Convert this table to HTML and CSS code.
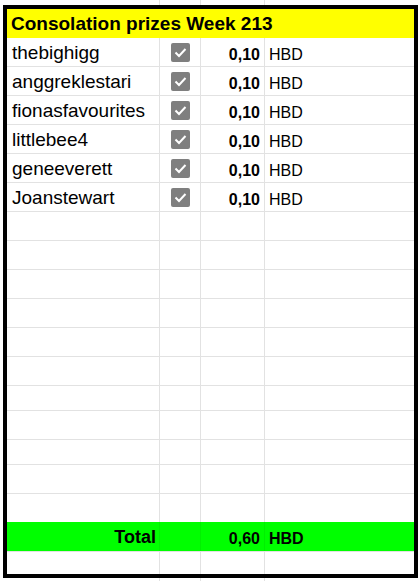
FILE: index.html
```html
<!DOCTYPE html>
<html>
<head>
<meta charset="utf-8">
<link rel="stylesheet" href="styles.css">
</head>
<body>
<div class="sheet">
  <div class="box">
    <div class="title">Consolation prizes Week 213</div>

    <div class="row h29"><div class="cell ca name">thebighigg</div><div class="cell cb"><svg class="chk" viewBox="0 0 19 19"><rect width="19" height="19" rx="2" fill="#7f7f7f"/><path d="M4.5 9.5 L8 13 L14.5 6" fill="none" stroke="#fff" stroke-width="2"/></svg></div><div class="cell cc num">0,10</div><div class="cell cd cur">HBD</div></div>
    <div class="row h29"><div class="cell ca name">anggreklestari</div><div class="cell cb"><svg class="chk" viewBox="0 0 19 19"><rect width="19" height="19" rx="2" fill="#7f7f7f"/><path d="M4.5 9.5 L8 13 L14.5 6" fill="none" stroke="#fff" stroke-width="2"/></svg></div><div class="cell cc num">0,10</div><div class="cell cd cur">HBD</div></div>
    <div class="row h29"><div class="cell ca name">fionasfavourites</div><div class="cell cb"><svg class="chk" viewBox="0 0 19 19"><rect width="19" height="19" rx="2" fill="#7f7f7f"/><path d="M4.5 9.5 L8 13 L14.5 6" fill="none" stroke="#fff" stroke-width="2"/></svg></div><div class="cell cc num">0,10</div><div class="cell cd cur">HBD</div></div>
    <div class="row h29"><div class="cell ca name">littlebee4</div><div class="cell cb"><svg class="chk" viewBox="0 0 19 19"><rect width="19" height="19" rx="2" fill="#7f7f7f"/><path d="M4.5 9.5 L8 13 L14.5 6" fill="none" stroke="#fff" stroke-width="2"/></svg></div><div class="cell cc num">0,10</div><div class="cell cd cur">HBD</div></div>
    <div class="row h29"><div class="cell ca name">geneeverett</div><div class="cell cb"><svg class="chk" viewBox="0 0 19 19"><rect width="19" height="19" rx="2" fill="#7f7f7f"/><path d="M4.5 9.5 L8 13 L14.5 6" fill="none" stroke="#fff" stroke-width="2"/></svg></div><div class="cell cc num">0,10</div><div class="cell cd cur">HBD</div></div>
    <div class="row h29"><div class="cell ca name">Joanstewart</div><div class="cell cb"><svg class="chk" viewBox="0 0 19 19"><rect width="19" height="19" rx="2" fill="#7f7f7f"/><path d="M4.5 9.5 L8 13 L14.5 6" fill="none" stroke="#fff" stroke-width="2"/></svg></div><div class="cell cc num">0,10</div><div class="cell cd cur">HBD</div></div>

    <div class="row h29"><div class="cell ca"></div><div class="cell cb"></div><div class="cell cc"></div><div class="cell cd"></div></div>
    <div class="row h29"><div class="cell ca"></div><div class="cell cb"></div><div class="cell cc"></div><div class="cell cd"></div></div>
    <div class="row h29"><div class="cell ca"></div><div class="cell cb"></div><div class="cell cc"></div><div class="cell cd"></div></div>
    <div class="row h29"><div class="cell ca"></div><div class="cell cb"></div><div class="cell cc"></div><div class="cell cd"></div></div>
    <div class="row h29"><div class="cell ca"></div><div class="cell cb"></div><div class="cell cc"></div><div class="cell cd"></div></div>
    <div class="row h29"><div class="cell ca"></div><div class="cell cb"></div><div class="cell cc"></div><div class="cell cd"></div></div>
    <div class="row h25"><div class="cell ca"></div><div class="cell cb"></div><div class="cell cc"></div><div class="cell cd"></div></div>
    <div class="row h29"><div class="cell ca"></div><div class="cell cb"></div><div class="cell cc"></div><div class="cell cd"></div></div>
    <div class="row h25"><div class="cell ca"></div><div class="cell cb"></div><div class="cell cc"></div><div class="cell cd"></div></div>
    <div class="row h29"><div class="cell ca"></div><div class="cell cb"></div><div class="cell cc"></div><div class="cell cd"></div></div>
    <div class="row h28 noline"><div class="cell ca"></div><div class="cell cb"></div><div class="cell cc"></div><div class="cell cd"></div></div>

    <div class="row total"><div class="cell ca tlabel">Total</div><div class="cell cb"></div><div class="cell cc num">0,60</div><div class="cell cd cur bold">HBD</div></div>
    <div class="row tail"><div class="cell ca"></div><div class="cell cb"></div><div class="cell cc"></div><div class="cell cd"></div></div>
  </div>
</div>
</body>
</html>
```

FILE: styles.css
```css
html, body {
  margin: 0;
  padding: 0;
  background: #fff;
}

.sheet {
  width: 420px;
  height: 581px;
  overflow: hidden;
  font-family: "Liberation Sans", Arial, sans-serif;
  color: #000;
  background-image:
    linear-gradient(#e2e2e2, #e2e2e2),
    linear-gradient(#e2e2e2, #e2e2e2),
    linear-gradient(#e2e2e2, #e2e2e2);
  background-size: 1px 100%, 1px 100%, 1px 100%;
  background-position: 159px 0, 200px 0, 264px 0;
  background-repeat: no-repeat;
  padding-top: 5px;
  box-sizing: border-box;
}

.box {
  margin-left: 3px;
  width: 407px;
  height: 565px;
  border: 4px solid #000;
  background: #fff;
  display: flex;
  flex-direction: column;
  overflow: hidden;
}

.title {
  height: 29px;
  flex: none;
  background: #ffff00;
  font-weight: bold;
  font-size: 19px;
  display: flex;
  align-items: center;
  padding-left: 4px;
  padding-top: 1px;
  box-sizing: border-box;
}

.row {
  display: flex;
  flex: none;
  border-bottom: 1px solid #e2e2e2;
  box-sizing: border-box;
}

.h29 { height: 29px; }
.h25 { height: 25px; }
.h28 { height: 28px; }
.noline { border-bottom: none; }

.cell {
  box-sizing: border-box;
  border-right: 1px solid #e2e2e2;
  display: flex;
  align-items: center;
  white-space: nowrap;
}

.ca { width: 153px; }
.cb { width: 41px; justify-content: center; }
.cc { width: 64px; justify-content: flex-end; }
.cd { width: 149px; border-right: none; }

.name {
  font-size: 19px;
  padding-left: 5px;
  padding-top: 1px;
}

.chk {
  width: 19px;
  height: 19px;
  display: block;
  margin-left: 1px;
}

.num {
  font-size: 16px;
  font-weight: bold;
  padding-right: 4px;
  align-items: flex-end;
  padding-bottom: 2px;
}

.cur {
  font-size: 16px;
  padding-left: 4px;
  align-items: flex-end;
  padding-bottom: 2px;
}

.bold { font-weight: bold; }

.total {
  height: 30px;
  background: #00ff00;
}

.total .cell {
  border-right-color: rgba(0, 0, 0, 0.06);
}

.total .cd { border-right: none; }

.tlabel {
  font-size: 18px;
  font-weight: bold;
  justify-content: flex-end;
  padding-right: 3px;
  align-items: flex-end;
  padding-bottom: 3px;
}

.total .num, .total .cur {
  padding-bottom: 3px;
}

.tail {
  height: 22px;
  border-bottom: none;
}
```
